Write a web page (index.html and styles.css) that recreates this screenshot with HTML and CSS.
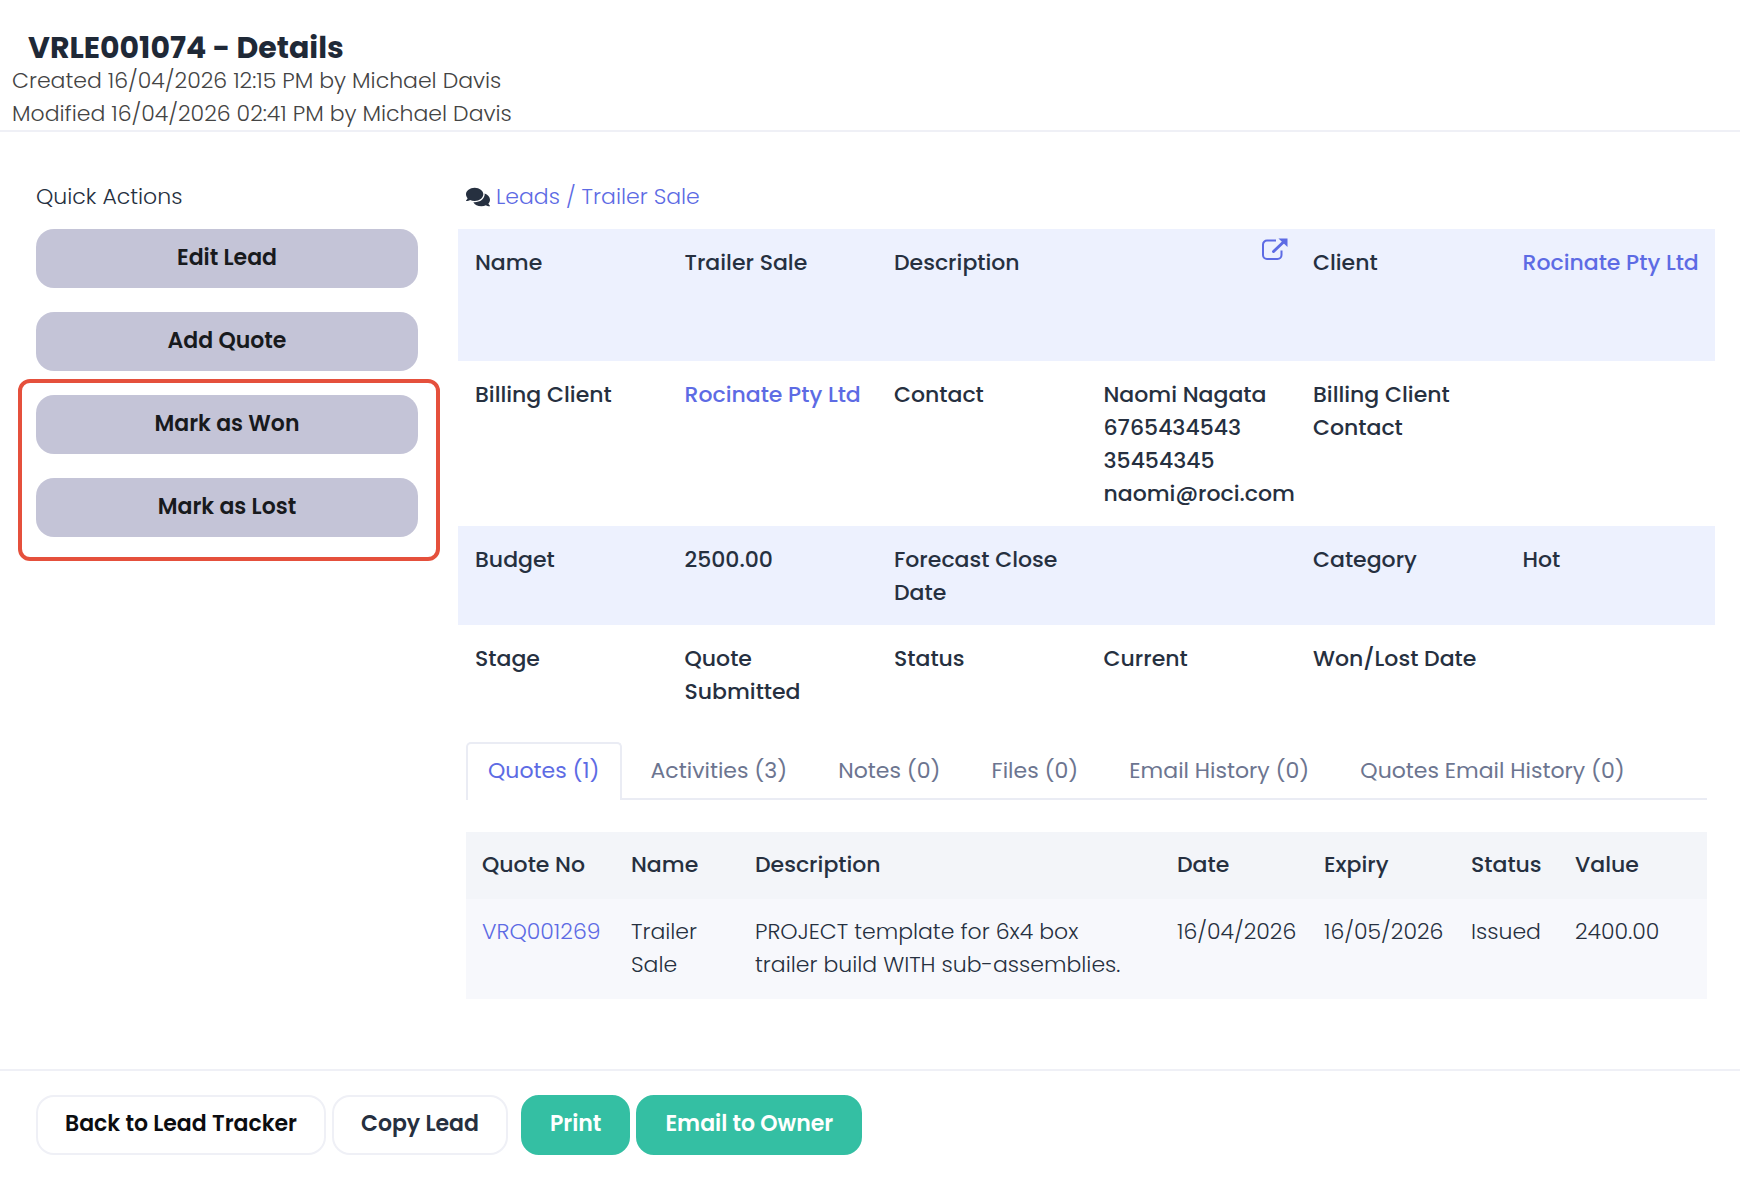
FILE: index.html
```html
<!DOCTYPE html>
<html lang="en">
<head>
    <meta charset="UTF-8">
    <meta name="viewport" content="width=device-width, initial-scale=1.0">
    <title>VRLE001074 - Details</title>
    <link rel="stylesheet" href="styles.css">
</head>
<body>
    <header class="page-header">
        <h1>VRLE001074 - Details</h1>
        <p>Created 16/04/2026 12:15 PM by Michael Davis</p>
        <p>Modified 16/04/2026 02:41 PM by Michael Davis</p>
    </header>

    <main class="page-body">
        <aside class="sidebar">
            <h2>Quick Actions</h2>
            <div class="actions">
                <button type="button" class="action">Edit Lead</button>
                <button type="button" class="action">Add Quote</button>
                <div class="highlight">
                    <button type="button" class="action">Mark as Won</button>
                    <button type="button" class="action">Mark as Lost</button>
                </div>
            </div>
        </aside>

        <section class="content">
            <nav class="breadcrumb">
                <svg class="comments-icon" viewBox="0 0 576 512" aria-hidden="true"><path fill="currentColor" d="M416 192c0-88.4-93.1-160-208-160S0 103.6 0 192c0 34.3 14.1 65.9 38 92-13.4 30.2-35.5 54.2-35.8 54.5-2.2 2.3-2.8 5.7-1.5 8.7S4.8 352 8 352c36.6 0 66.9-12.3 88.7-25 32.2 15.7 70.3 25 111.3 25 114.9 0 208-71.6 208-160zm122 220c23.9-26 38-57.7 38-92 0-66.9-53.5-124.2-129.3-148.1.9 6.6 1.3 13.3 1.3 20.1 0 105.9-107.7 192-240 192-10.8 0-21.3-.8-31.7-1.9C207.8 439.6 281.8 480 368 480c41 0 79.1-9.2 111.3-25 21.8 12.7 52.1 25 88.7 25 3.2 0 6.1-1.9 7.3-4.8 1.3-2.9.7-6.3-1.5-8.7-.3-.3-22.4-24.2-35.8-54.5z"/></svg>
                <a href="#">Leads / Trailer Sale</a>
            </nav>

            <table class="details">
                <tr class="tall">
                    <th>Name</th>
                    <td>Trailer Sale</td>
                    <th>Description</th>
                    <td class="icon-cell">
                        <a href="#" aria-label="Open description"><svg class="open-icon" viewBox="0 0 26 22" fill="none" stroke="currentColor" stroke-width="2" aria-hidden="true"><path d="M14 2.500H5a4 4 0 0 0-4 4V17a4 4 0 0 0 4 4h10.500a4 4 0 0 0 4-4v-4.500"/><path stroke-width="3" stroke-linecap="round" d="M11.500 13.500L21 4.500"/><path fill="currentColor" stroke="none" d="M16.500.500H25.500V9z"/></svg></a>
                    </td>
                    <th>Client</th>
                    <td><a href="#">Rocinate Pty Ltd</a></td>
                </tr>
                <tr>
                    <th>Billing Client</th>
                    <td><a href="#">Rocinate Pty Ltd</a></td>
                    <th>Contact</th>
                    <td>Naomi Nagata<br>6765434543<br>35454345<br>naomi@roci.com</td>
                    <th>Billing Client Contact</th>
                    <td></td>
                </tr>
                <tr>
                    <th>Budget</th>
                    <td>2500.00</td>
                    <th>Forecast Close Date</th>
                    <td></td>
                    <th>Category</th>
                    <td>Hot</td>
                </tr>
                <tr>
                    <th>Stage</th>
                    <td>Quote Submitted</td>
                    <th>Status</th>
                    <td>Current</td>
                    <th>Won/Lost Date</th>
                    <td></td>
                </tr>
            </table>

            <div class="related">
                <nav class="tabs">
                    <a href="#" class="tab active">Quotes (1)</a>
                    <a href="#" class="tab">Activities (3)</a>
                    <a href="#" class="tab">Notes (0)</a>
                    <a href="#" class="tab">Files (0)</a>
                    <a href="#" class="tab">Email History (0)</a>
                    <a href="#" class="tab">Quotes Email History (0)</a>
                </nav>

                <table class="quotes">
                    <colgroup>
                        <col class="col-no">
                        <col class="col-name">
                        <col>
                        <col class="col-date">
                        <col class="col-date">
                        <col class="col-status">
                        <col class="col-value">
                    </colgroup>
                    <thead>
                        <tr>
                            <th>Quote No</th>
                            <th>Name</th>
                            <th>Description</th>
                            <th>Date</th>
                            <th>Expiry</th>
                            <th>Status</th>
                            <th>Value</th>
                        </tr>
                    </thead>
                    <tbody>
                        <tr>
                            <td><a href="#">VRQ001269</a></td>
                            <td>Trailer Sale</td>
                            <td>PROJECT template for 6x4 box trailer build WITH sub-assemblies.</td>
                            <td>16/04/2026</td>
                            <td>16/05/2026</td>
                            <td>Issued</td>
                            <td>2400.00</td>
                        </tr>
                    </tbody>
                </table>
            </div>
        </section>
    </main>

    <footer class="page-footer">
        <div class="button-group">
            <button type="button" class="btn btn-back">Back to Lead Tracker</button>
            <button type="button" class="btn">Copy Lead</button>
        </div>
        <div class="button-group">
            <button type="button" class="btn btn-green">Print</button>
            <button type="button" class="btn btn-green">Email to Owner</button>
        </div>
    </footer>
</body>
</html>
```

FILE: styles.css
```css
* {
    box-sizing: border-box;
}

body {
    margin: 0;
    background-color: #fff;
    color: #263040;
    font-family: Poppins, Inter, sans-serif;
    font-size: 22px;
    font-weight: 300;
    line-height: 33px;
}

a {
    color: #5d6be4;
    text-decoration: none;
}

button {
    font-family: inherit;
    font-size: 22px;
    font-weight: 600;
    line-height: 33px;
    cursor: pointer;
}

.page-header {
    padding: 31px 12px 0;
    border-bottom: 2px solid #eff0f6;
    color: #444;
}

.page-header h1 {
    margin: 0;
    padding: 0 16px;
    color: #1f2937;
    font-size: 30px;
    font-weight: 700;
}

.page-header p {
    margin: 0;
    padding-top: 1px;
    line-height: 32px;
}

.page-body {
    display: flex;
    gap: 40px;
    padding: 48px 25px 70px 36px;
}

.sidebar {
    flex: 0 0 382px;
}

.sidebar h2 {
    margin: 0 0 16px;
    font-size: 22px;
    font-weight: 300;
}

.actions,
.highlight {
    display: flex;
    flex-direction: column;
    gap: 24px;
}

.action {
    height: 59px;
    padding: 0 24px 2px;
    border: none;
    border-radius: 18px;
    background-color: #c4c4d7;
    color: #181a1d;
}

.highlight {
    margin: -16px -22px 0 -18px;
    padding: 12px 18px 20px 14px;
    border: 4px solid #e5503c;
    border-radius: 12px;
}

.content {
    flex: 1;
    min-width: 0;
}

.breadcrumb {
    display: flex;
    align-items: center;
    gap: 6px;
    margin-bottom: 16px;
    padding-left: 8px;
}

.comments-icon {
    width: 24px;
    height: 22px;
}

.details,
.quotes {
    width: 100%;
    border-collapse: collapse;
    table-layout: fixed;
}

.details th,
.details td {
    padding: 17px 16px 16px 17px;
    font-weight: 500;
    text-align: left;
    vertical-align: top;
}

.details tr:nth-child(odd) {
    background-color: #edf1fe;
}

.details .tall {
    height: 132px;
}

.details .icon-cell {
    padding: 9px 8px 0 0;
    text-align: right;
}

.open-icon {
    display: inline-block;
    width: 26px;
    height: 22px;
    vertical-align: top;
}

.related {
    padding: 18px 8px 0;
}

.tabs {
    display: flex;
    gap: 7px;
    margin-bottom: 32px;
    border-bottom: 2px solid #eaecf4;
}

.tab {
    margin-bottom: -2px;
    padding: 10px 20px 13px;
    border: 2px solid transparent;
    border-bottom: none;
    color: #6c7590;
    font-weight: 400;
}

.tab.active {
    border-color: #eaecf4;
    border-radius: 5px 5px 0 0;
    background-color: #fff;
    color: #5d6be4;
}

.quotes th,
.quotes td {
    padding: 16px 0 18px 16px;
    text-align: left;
    vertical-align: top;
}

.quotes th {
    background-color: #f3f5f9;
    font-weight: 500;
}

.quotes td {
    background-color: #f7f8fc;
}

.col-no {
    width: 149px;
}

.col-name {
    width: 124px;
}

.col-date {
    width: 147px;
}

.col-status {
    width: 104px;
}

.col-value {
    width: 148px;
}

.quotes td:nth-child(3) {
    padding-right: 32px;
}

.page-footer {
    display: flex;
    gap: 13px;
    padding: 24px 36px;
    border-top: 2px solid #eff0f6;
}

.button-group {
    display: flex;
    gap: 6px;
}

.btn {
    height: 60px;
    padding: 0 27px 4px;
    border: 2px solid #eff0f6;
    border-radius: 18px;
    background-color: #fff;
    color: #263040;
}

.btn-back {
    color: #0c0d10;
}

.btn-green {
    border-color: #34bfa3;
    background-color: #34bfa3;
    color: #fff;
}
```
